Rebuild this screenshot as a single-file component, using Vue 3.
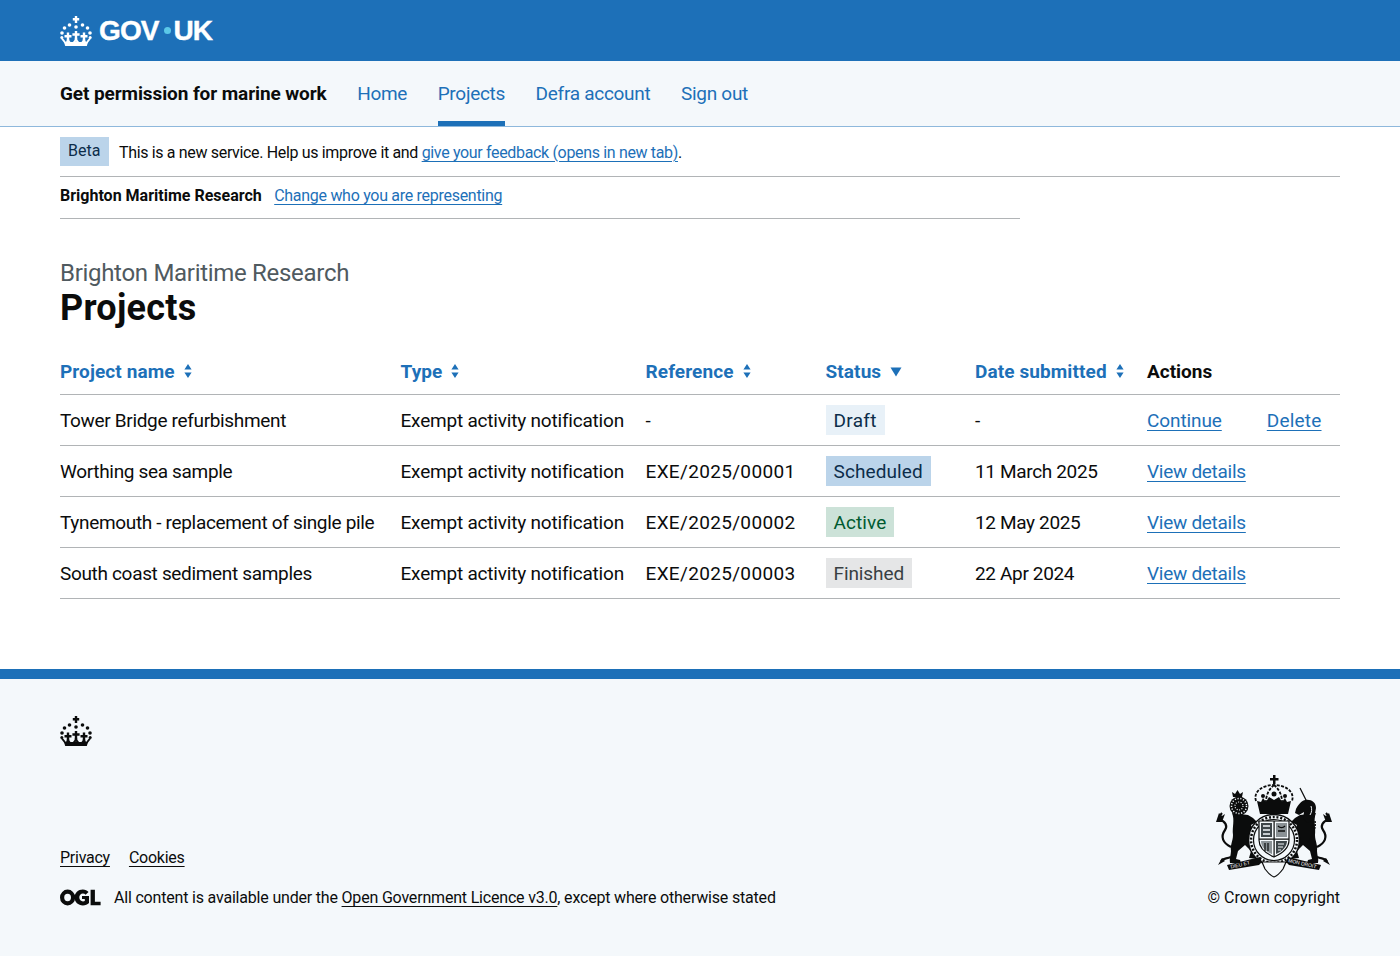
<script setup>
const navItems = [
  { label: "Home" },
  { label: "Projects", active: true },
  { label: "Defra account" },
  { label: "Sign out" }
]

const columns = [
  { label: "Project name", sort: "both" },
  { label: "Type", sort: "both" },
  { label: "Reference", sort: "both" },
  { label: "Status", sort: "down" },
  { label: "Date submitted", sort: "both" }
]

const projects = [
  { name: "Tower Bridge refurbishment", ref: "-", status: "Draft", tag: "draft", date: "-", links: ["Continue", "Delete"] },
  { name: "Worthing sea sample", ref: "EXE/2025/00001", status: "Scheduled", tag: "scheduled", date: "11 March 2025", links: ["View details"] },
  { name: "Tynemouth - replacement of single pile", ref: "EXE/2025/00002", status: "Active", tag: "active", date: "12 May 2025", links: ["View details"] },
  { name: "South coast sediment samples", ref: "EXE/2025/00003", status: "Finished", tag: "finished", date: "22 Apr 2024", links: ["View details"] }
]
</script>

<template>
  <div class="page">
    <svg class="defs" width="0" height="0" aria-hidden="true">
      <symbol id="crown" viewBox="0 0 32 30">
        <path fill="currentColor" d="M14.800 0h2.400v2h2v2.400h-2V7h-2.400V4.400h-2V2h2z" />
        <g fill="currentColor">
          <circle cx="9.500" cy="9" r="1.800" />
          <circle cx="22.500" cy="9" r="1.800" />
          <circle cx="4.500" cy="12" r="1.800" />
          <circle cx="27.500" cy="12" r="1.800" />
          <circle cx="2" cy="17" r="1.800" />
          <circle cx="30" cy="17" r="1.800" />
          <circle cx="1.800" cy="21.500" r="1.500" />
          <circle cx="30.200" cy="21.500" r="1.500" />
          <circle cx="16" cy="11" r="1.800" />
          <path d="M14.800 15h2.400v2.300h2.400v2.400h-2.400V23h-2.400v-3.300h-2.400v-2.400h2.400zM6.800 16.500h2.400V19h2.300v2.400H9.200v3H6.800v-3H4.500V19h2.300zM22.800 16.500h2.400V19h2.300v2.400h-2.300v3h-2.400v-3h-2.300V19h2.300z" />
          <path d="M4 26h24l-1.200 4H5.200z" />
        </g>
        <path fill="none" stroke="currentColor" stroke-width="2" d="M2 22.500L5.500 27M30 22.500L26.500 27M8 23c0 2-1 3-1.500 4M8 23c0 2 1 3 2 4M16 22c0 2-1.500 4-2.500 5M16 22c0 2 1.500 4 2.500 5M24 23c0 2 1 3 1.500 4M24 23c0 2-1 3-2 4" />
      </symbol>
    </svg>

    <header class="gov-header">
      <div class="gov-header-inner">
        <svg class="crown-white" width="32" height="30"><use href="#crown" /></svg>
        <span class="wordmark">GOV<span class="dot"></span>UK</span>
      </div>
    </header>

    <nav class="service-nav">
      <div class="service-nav-inner">
        <span class="service-name">Get permission for marine work</span>
        <a
          v-for="item in navItems"
          :key="item.label"
          class="nav-link"
          :class="{ active: item.active }"
          href="#"
        >{{ item.label }}</a>
      </div>
    </nav>

    <div class="container">
      <div class="phase-banner">
        <strong class="phase-tag">Beta</strong>
        <span class="phase-text">This is a new service. Help us improve it and <a href="#">give your feedback (opens in new tab)</a>.</span>
      </div>

      <div class="org-bar">
        <strong>Brighton Maritime Research</strong>
        <a href="#">Change who you are representing</a>
      </div>

      <main>
        <span class="caption">Brighton Maritime Research</span>
        <h1>Projects</h1>

        <table>
          <colgroup>
            <col style="width: 340.5px" />
            <col style="width: 245px" />
            <col style="width: 180px" />
            <col style="width: 149.5px" />
            <col style="width: 172px" />
            <col />
          </colgroup>
          <thead>
            <tr>
              <th v-for="col in columns" :key="col.label">
                <a class="sort" href="#">
                  {{ col.label }}
                  <svg v-if="col.sort === 'both'" class="sort-icon" width="8" height="16" viewBox="0 0 8 16">
                    <path d="M4 1l3.600 5.500H.4zM4 15l-3.600-5.500h7.200z" />
                  </svg>
                  <svg v-else class="sort-down" width="12" height="10" viewBox="0 0 12 10">
                    <path d="M.5.500h11L6 9.500z" />
                  </svg>
                </a>
              </th>
              <th>Actions</th>
            </tr>
          </thead>
          <tbody>
            <tr v-for="p in projects" :key="p.name">
              <td class="name">{{ p.name }}</td>
              <td class="type">Exempt activity notification</td>
              <td class="ref">{{ p.ref }}</td>
              <td><strong class="tag" :class="p.tag">{{ p.status }}</strong></td>
              <td class="date">{{ p.date }}</td>
              <td class="actions">
                <a v-for="link in p.links" :key="link" href="#">{{ link }}</a>
              </td>
            </tr>
          </tbody>
        </table>
      </main>
    </div>

    <footer class="gov-footer">
      <div class="footer-inner">
        <svg class="footer-crown" width="32" height="30"><use href="#crown" /></svg>
        <div class="footer-row">
          <div class="footer-meta">
            <div class="footer-links">
              <a href="#">Privacy</a>
              <a href="#">Cookies</a>
            </div>
            <div class="licence">
              <svg class="ogl" width="41" height="17" viewBox="0 0 41 17">
                <path fill-rule="evenodd" d="M7.600.6a7.600 7.900 0 1 1 0 15.800A7.600 7.900 0 0 1 7.600.6zm0 4.200a3.400 3.700 0 1 0 0 7.400 3.400 3.700 0 0 0 0-7.400z" />
                <path d="M22.800.6c2.500 0 4.400 1 5.700 2.500l-2.900 2.600c-.7-.7-1.600-1.100-2.700-1.100a3.600 3.600 0 0 0-3.600 3.900c0 2.300 1.600 3.900 3.700 3.900.7 0 1.300-.1 1.800-.4V10h-2.800V6.900H29v7.200c-1.500 1.400-3.600 2.300-6.100 2.300-4.800 0-8.300-3.300-8.300-7.900S18.200.6 22.800.6z" />
                <path d="M30.600.8h4.300v12h5.700v3.400h-10z" />
              </svg>
              <span>All content is available under the <a href="#">Open Government Licence v3.0</a>, except where otherwise stated</span>
            </div>
          </div>
          <div class="copyright">
            <svg class="arms" width="117" height="103" viewBox="0 0 117 103">
              <!-- lion and its tail -->
              <g id="rampant">
                <path d="M17 38c3 7 0 14 1 22 0 6-3 10-2 16 0 4-2 8-1 12h11l-1-3-4-1 2-8 7-6 6 6-2 7 10 1 1-3-5-2 1-9-5-8 2-7-2-5 6-3-4-4-5-3z" />
                <path fill="none" stroke="#0b0c0c" stroke-width="2.200" d="M16 72C8 68 5 62 10 55c3-4 0-9-5-10M5 45c-1-3 0-5 2-7M16 82c-5 2-8 1-10 4" />
                <path d="M1 47l3-9 3 3 3-2-3 8zM3 90l4-7 3 3z" />
              </g>
              <circle cx="24" cy="31" r="9.500" />
              <circle cx="24" cy="31" r="7.500" fill="none" stroke="#f4f8fb" stroke-width="1.500" stroke-dasharray="1.200 1.600" />
              <circle cx="24" cy="31" r="4" fill="none" stroke="#f4f8fb" stroke-width="1.200" stroke-dasharray="1 1.500" />
              <path d="M18 22l-1-5 3 2 2.500-4 2.500 4 3-2-1 5z" />

              <!-- unicorn: same rearing body mirrored -->
              <use href="#rampant" transform="translate(118 0) scale(-1 1)" />
              <path d="M101 33c0-6-5-9-11-8-4 1-7 5-9 9l-1 4 4 2 5-3-1 7 5 4 6-4z" />
              <path fill="none" stroke="#0b0c0c" stroke-width="1.200" d="M85 13l7 14" />
              <path fill="none" stroke="#f4f8fb" stroke-width="1" d="M96 31c1 3 1 6-1 9" />
              <path fill="none" stroke="#0b0c0c" stroke-width="1.500" stroke-dasharray="2 1" d="M100 46c1 8-2 14-7 22" />

              <!-- crown -->
              <path d="M58 0h2.500v3h3v2.500h-3V9H58V5.500h-3V3h3z" />
              <path fill="none" stroke="#0b0c0c" stroke-width="1.800" d="M41 26c-3-9 6-16 18-16s21 7 18 16M59 10c-5 4-8 10-8 17M59 10c5 4 8 10 8 17" stroke-dasharray="3 1.400" />
              <path d="M42 26l4 1 2-4 3 4 3-5 5 3 5-3 3 5 3-4 2 4 4-1-3 13H45z" />
              <circle cx="48" cy="21" r="2" />
              <circle cx="59" cy="19" r="2.500" />
              <circle cx="70" cy="21" r="2" />

              <!-- garter and shield -->
              <circle cx="59" cy="65" r="25.500" fill="#f4f8fb" stroke="#0b0c0c" stroke-width="1.500" />
              <circle cx="59" cy="65" r="20.500" fill="none" stroke="#0b0c0c" stroke-width="1.200" />
              <circle cx="59" cy="65" r="23" fill="none" stroke="#0b0c0c" stroke-width="2.500" stroke-dasharray="2 1.800" />
              <path fill="#f4f8fb" stroke="#0b0c0c" stroke-width="1.200" d="M44 46h30v19c0 9-8 14-15 17-7-3-15-8-15-17z" />
              <path d="M58.500 46h1.200v36h-1.200zM44 63.500h30v1.200H44z" />
              <path fill="#3d4549" d="M46 48h11v14H46z" />
              <path fill="none" stroke="#f4f8fb" stroke-width="1.300" d="M48 51h7M48 55h7M48 59h7" />
              <path fill="#8a9195" d="M61 48h11v14H61z" />
              <path fill="none" stroke="#0b0c0c" stroke-width="1.300" d="M63 51c2 2 5 2 7 0M63 56h7" />
              <path fill="#3d4549" d="M61 66h11c0 5-4 10-11 13z" />
              <path fill="none" stroke="#f4f8fb" stroke-width="1" d="M63 69h6M63 72h5M63 75h3" />
              <path fill="#8a9195" d="M46 66h11v13c-6-2-11-7-11-13z" />
              <path fill="none" stroke="#0b0c0c" stroke-width="1.200" d="M50 68v8M53 68v8" />

              <!-- motto scrolls -->
              <path d="M14 95l-2-5 33-8 2 5-3 3z" />
              <path d="M104 95l2-5-33-8-2 5 3 3z" />
              <path fill="#f4f8fb" stroke="#0b0c0c" stroke-width="1.200" d="M47 87h24l-3 7c-3 4-6 7-9 8-3-1-6-4-9-8z" />
              <text x="16" y="93.500" class="motto" transform="rotate(-13 16 93.500)">DIEU ET</text>
              <text x="73" y="87" class="motto" transform="rotate(13 73 87)">MON DROIT</text>
            </svg>
            <span>© Crown copyright</span>
          </div>
        </div>
      </div>
    </footer>
  </div>
</template>

<style>
html,
body {
  margin: 0;
  background: #fff;
}
</style>

<style scoped>
.page {
  font-family: Roboto, "Liberation Sans", Arial, sans-serif;
  color: #0b0c0c;
  min-height: 956px;
  display: flex;
  flex-direction: column;
}

.defs {
  position: absolute;
}

a {
  color: #1d70b8;
  text-underline-offset: 2.5px;
}

.gov-header {
  background: #1d70b8;
  height: 61px;
}

.gov-header-inner {
  display: flex;
  align-items: center;
  gap: 7px;
  padding: 0 60px;
  height: 61px;
  color: #fff;
}

.wordmark {
  font-family: "Liberation Sans", Arial, sans-serif;
  font-weight: 700;
  font-size: 28px;
  letter-spacing: -0.9px;
  -webkit-text-stroke: 0.4px #fff;
  line-height: 1;
}

.dot {
  display: inline-block;
  width: 7px;
  height: 7px;
  margin: 0 3px 0 5px;
  border-radius: 50%;
  background: #5bc8e8;
  vertical-align: 6px;
}

.service-nav {
  background: #f4f8fb;
  border-bottom: 1px solid #8eb8dc;
}

.service-nav-inner {
  display: flex;
  align-items: stretch;
  padding: 0 60px;
  height: 65px;
  font-size: 19px;
}

.service-name {
  display: flex;
  align-items: center;
  font-weight: 700;
  margin-right: 30.5px;
  letter-spacing: -0.1px;
}

.nav-link {
  display: flex;
  align-items: center;
  margin-right: 30.5px;
  text-decoration: none;
  box-sizing: border-box;
  border-bottom: 5px solid transparent;
  padding-top: 5px;
  letter-spacing: -0.28px;
}

.nav-link.active {
  border-bottom-color: #1d70b8;
}

.container {
  padding: 0 60px;
}

.phase-banner {
  display: flex;
  align-items: center;
  gap: 10px;
  padding: 10px 0;
  height: 29px;
  border-bottom: 1px solid #b1b4b6;
  font-size: 16px;
  letter-spacing: -0.34px;
}

.phase-text {
  padding-top: 2px;
}

.phase-tag {
  font-weight: 400;
  background: #bbd4ea;
  color: #0c2d4a;
  padding: 0 8px;
  height: 29px;
  line-height: 28px;
  letter-spacing: 0;
  min-width: 33px;
}

.org-bar {
  display: flex;
  gap: 12.5px;
  align-items: center;
  width: 960px;
  padding-bottom: 4px;
  box-sizing: border-box;
  height: 42px;
  border-bottom: 1px solid #b1b4b6;
  font-size: 16px;
}

.org-bar strong {
  font-weight: 700;
}

.org-bar a {
  letter-spacing: -0.29px;
}

main {
  padding-top: 39px;
}

.caption {
  display: block;
  font-size: 24px;
  line-height: 30px;
  color: #505a5f;
  letter-spacing: -0.3px;
}

h1 {
  margin: 0 0 20px;
  font-size: 36px;
  line-height: 40px;
  font-weight: 700;
  letter-spacing: 0.25px;
}

table {
  width: 1280px;
  border-collapse: collapse;
  table-layout: fixed;
  font-size: 19px;
  margin-bottom: 70px;
}

th,
td {
  padding: 0;
  text-align: left;
  border-bottom: 1px solid #b1b4b6;
  height: 50px;
}

th {
  height: 46px;
  font-weight: 700;
}

td.name {
  letter-spacing: -0.33px;
}

td.type {
  letter-spacing: -0.2px;
}

td.ref {
  letter-spacing: 0.33px;
}

td.date {
  letter-spacing: -0.35px;
}

.sort {
  display: inline-flex;
  align-items: center;
  gap: 9px;
  text-decoration: none;
  fill: #1d70b8;
  letter-spacing: 0.1px;
}

.sort-down {
  margin-top: 1px;
}

.tag {
  display: inline-block;
  font-weight: 400;
  padding: 1px 8px 0;
  line-height: 29px;
  letter-spacing: 0.1px;
}

.tag.draft {
  background: #e8f1f8;
  color: #0c2d4a;
  letter-spacing: 0.3px;
}

.tag.scheduled {
  background: #bbd4ea;
  color: #0c2d4a;
}

.tag.active {
  background: #cce2d8;
  color: #005a30;
}

.tag.finished {
  background: #e5e6e7;
  color: #383f43;
  letter-spacing: -0.1px;
}

.actions {
  white-space: nowrap;
  letter-spacing: -0.28px;
}

.actions a:first-child:not(:last-child) {
  letter-spacing: -0.1px;
}

.actions a + a {
  margin-left: 45px;
  letter-spacing: 0.2px;
}

.gov-footer {
  flex: 1;
  background: #f4f8fb;
  border-top: 10px solid #1d70b8;
}

.footer-inner {
  padding: 37px 60px 0;
}

.footer-crown {
  display: block;
  color: #0b0c0c;
}

.footer-row {
  display: flex;
  justify-content: space-between;
  align-items: flex-end;
  margin-top: 29px;
  font-size: 16px;
}

.gov-footer a {
  color: #0b0c0c;
}

.footer-links {
  display: flex;
  gap: 19px;
  margin-bottom: 21px;
  letter-spacing: -0.25px;
}

.licence {
  display: flex;
  align-items: center;
  gap: 13px;
  letter-spacing: -0.19px;
}

.ogl {
  fill: #0b0c0c;
}

.copyright {
  display: flex;
  flex-direction: column;
  align-items: center;
  gap: 10px;
}

.arms {
  fill: #0b0c0c;
}

.motto {
  font-size: 5px;
  fill: #fff;
  font-family: "Liberation Sans", Arial, sans-serif;
}
</style>
